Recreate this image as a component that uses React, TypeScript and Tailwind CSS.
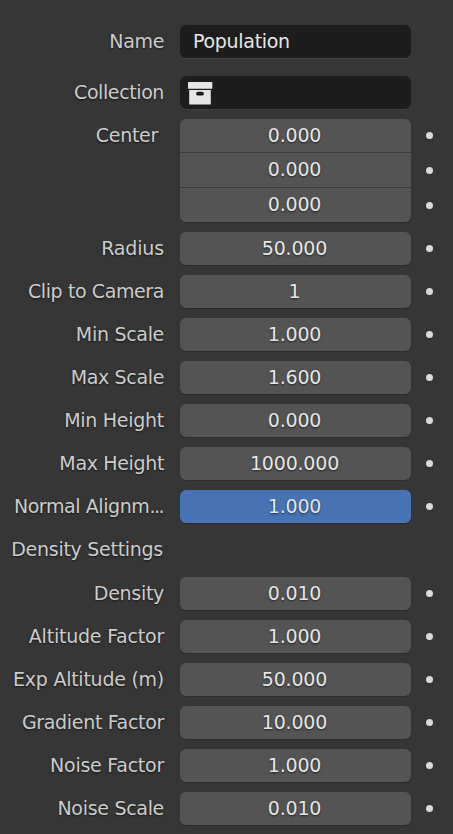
import type { ReactNode } from "react";

type Property = { label: ReactNode; value: string; spacing: string; active?: boolean };

const transform: Property[] = [
  { label: "Radius", value: "50.000", spacing: "tracking-[-0.15px]" },
  { label: "Clip to Camera", value: "1", spacing: "tracking-[-0.4px]" },
  { label: "Min Scale", value: "1.000", spacing: "tracking-[-0.3px]" },
  { label: "Max Scale", value: "1.600", spacing: "tracking-[-0.35px]" },
  { label: "Min Height", value: "0.000", spacing: "tracking-[-0.27px]" },
  { label: "Max Height", value: "1000.000", spacing: "tracking-[-0.35px]" },
  {
    label: (
      <>
        Normal Alignm<span className="mr-[1px] tracking-[-1.5px]">...</span>
      </>
    ),
    value: "1.000",
    spacing: "tracking-[-0.42px]",
    active: true,
  },
];

const density: Property[] = [
  { label: "Density", value: "0.010", spacing: "tracking-[-0.3px]" },
  { label: "Altitude Factor", value: "1.000", spacing: "tracking-[-0.22px]" },
  { label: "Exp Altitude (m)", value: "50.000", spacing: "tracking-[-0.25px]" },
  { label: "Gradient Factor", value: "10.000", spacing: "tracking-[-0.32px]" },
  { label: "Noise Factor", value: "1.000", spacing: "tracking-[-0.25px]" },
  { label: "Noise Scale", value: "0.010", spacing: "tracking-[-0.3px]" },
];

function Label({
  children,
  inset = "pr-[16px]",
  spacing,
}: {
  children: ReactNode;
  inset?: string;
  spacing: string;
}) {
  return (
    <div
      className={`flex h-[33px] w-[180px] shrink-0 items-center justify-end whitespace-nowrap text-[#cccccc] [text-shadow:0_1px_2px_rgba(0,0,0,0.6)] ${inset}`}
    >
      <span className={spacing}>{children}</span>
    </div>
  );
}

function Dot() {
  return <span className="ml-[15px] size-[7px] shrink-0 rounded-full bg-[#dadada]" />;
}

function PropertyRow({ label, value, spacing, active }: Property) {
  return (
    <div className="flex h-[33px] items-center">
      <Label spacing={spacing}>{label}</Label>
      <div
        className={`flex h-[33px] w-[231px] items-center justify-center rounded-[6px] pr-[2px] tracking-[-0.2px] text-[#e6e6e6] shadow-[0_1px_1px_#2c2c2c] [text-shadow:0_1px_2px_rgba(0,0,0,0.6)] ${active ? "bg-[#4772b3]" : "bg-[#545454]"}`}
      >
        {value}
      </div>
      <Dot />
    </div>
  );
}

function CollectionIcon() {
  return (
    <svg width="26" height="24" viewBox="0 0 26 24" fill="#e6e6e6">
      <rect x="1" y="1" width="24.3" height="6.7" rx="0.4" />
      <path
        fillRule="evenodd"
        d="M2.2 9h21.6v14.5H2.2zM11 10.8a1.8 1.8 0 0 0 0 3.8h4a1.8 1.8 0 0 0 0-3.8z"
      />
    </svg>
  );
}

export default function App() {
  return (
    <div className="h-[834px] w-[453px] overflow-hidden bg-[#363636] pt-[25px] font-['DejaVu_Sans',sans-serif] text-[19px] leading-none">
      <div className="flex h-[33px]">
        <Label spacing="tracking-[-0.35px]">Name</Label>
        <div className="flex w-[231px] items-center rounded-[6px] bg-[#1d1d1d] pl-[13px] tracking-[-0.3px] text-[#e6e6e6] shadow-[0_1px_0_#404040]">
          Population
        </div>
      </div>
      <div className="mt-[18px] flex h-[33px]">
        <Label spacing="tracking-[-0.4px]">Collection</Label>
        <div className="flex w-[231px] items-center rounded-[6px] bg-[#1d1d1d] pl-[7px] shadow-[0_1px_0_#404040]">
          <CollectionIcon />
        </div>
      </div>
      <div className="mt-[10px] flex h-[103px]">
        <Label spacing="tracking-[-0.3px]" inset="pr-[22px]">
          Center
        </Label>
        <div className="flex w-[231px] flex-col gap-px overflow-hidden rounded-[6px] bg-[#3c3c3c] tracking-[-0.2px] text-[#e6e6e6] shadow-[0_1px_1px_#2c2c2c] [text-shadow:0_1px_2px_rgba(0,0,0,0.6)]">
          <div className="flex h-[33px] items-center justify-center bg-[#545454] pr-[2px]">0.000</div>
          <div className="flex h-[34px] items-center justify-center bg-[#545454] pr-[2px] pb-[2px]">0.000</div>
          <div className="flex h-[34px] items-center justify-center bg-[#545454] pr-[2px] pb-[2px]">0.000</div>
        </div>
        <div className="flex flex-col gap-[28px] pt-[13px]">
          <Dot />
          <Dot />
          <Dot />
        </div>
      </div>
      <div className="mt-[10px] flex flex-col gap-[10px]">
        {transform.map((row, index) => (
          <PropertyRow key={index} {...row} />
        ))}
      </div>
      <div className="mt-[10px]">
        <Label spacing="tracking-[-0.28px]" inset="pr-[17px]">
          Density Settings
        </Label>
      </div>
      <div className="mt-[11px] flex flex-col gap-[10px]">
        {density.map((row, index) => (
          <PropertyRow key={index} {...row} />
        ))}
      </div>
    </div>
  );
}
